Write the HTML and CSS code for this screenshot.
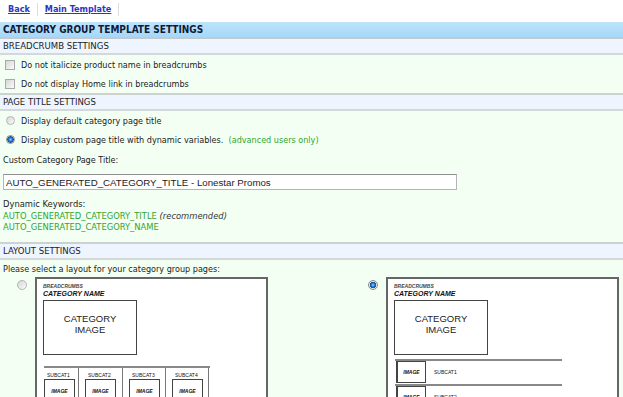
FILE: index.html
```html
<!DOCTYPE html>
<html lang="en">
<head>
  <meta charset="UTF-8" />
  <title>Category Group Template Settings</title>
  <link rel="stylesheet" href="styles.css">
</head>
<body>
  <div class="topnav">
    <a href="#">Back</a><span class="sep"></span><a href="#">Main Template</a><span class="sep"></span>
  </div>

  <div class="page-title">CATEGORY GROUP TEMPLATE SETTINGS</div>

  <div class="section-head">BREADCRUMB SETTINGS</div>
  <div class="section-body">
    <label class="opt"><input type="checkbox" class="chk" />Do not italicize product name in breadcrumbs</label>
    <label class="opt"><input type="checkbox" class="chk" />Do not display Home link in breadcrumbs</label>
  </div>

  <div class="section-head">PAGE TITLE SETTINGS</div>
  <div class="section-body title-body">
    <label class="opt"><input type="radio" name="ptitle" class="rad" />Display default category page title</label>
    <label class="opt"><input type="radio" name="ptitle" class="rad" checked />Display custom page title with dynamic variables. <span class="green">&nbsp;(advanced users only)</span></label>
    <div class="field-label">Custom Category Page Title:</div>
    <input type="text" class="title-input" value="AUTO_GENERATED_CATEGORY_TITLE - Lonestar Promos" />
    <div class="keywords">
      <div>Dynamic Keywords:</div>
      <div><span class="green">AUTO_GENERATED_CATEGORY_TITLE</span> <em>(recommended)</em></div>
      <div><span class="green">AUTO_GENERATED_CATEGORY_NAME</span></div>
    </div>
  </div>

  <div class="section-head">LAYOUT SETTINGS</div>
  <div class="layout-body">
    <div class="field-label">Please select a layout for your category group pages:</div>
    <div class="layouts">
      <label class="layout-opt">
        <input type="radio" name="layout" class="rad" />
        <div class="preview">
          <div class="pv-crumbs">BREADCRUMBS</div>
          <div class="pv-name">CATEGORY NAME</div>
          <div class="pv-catimg">CATEGORY<br>IMAGE</div>
          <div class="pv-grid">
            <div class="pv-cell"><div class="pv-sub">SUBCAT1</div><div class="pv-img">IMAGE</div></div>
            <div class="pv-cell"><div class="pv-sub">SUBCAT2</div><div class="pv-img">IMAGE</div></div>
            <div class="pv-cell"><div class="pv-sub">SUBCAT3</div><div class="pv-img">IMAGE</div></div>
            <div class="pv-cell"><div class="pv-sub">SUBCAT4</div><div class="pv-img">IMAGE</div></div>
          </div>
        </div>
      </label>
      <label class="layout-opt">
        <input type="radio" name="layout" class="rad" checked />
        <div class="preview">
          <div class="pv-crumbs">BREADCRUMBS</div>
          <div class="pv-name">CATEGORY NAME</div>
          <div class="pv-catimg">CATEGORY<br>IMAGE</div>
          <div class="pv-list">
            <div class="pv-row"><div class="pv-img">IMAGE</div><span>SUBCAT1</span></div>
            <div class="pv-row"><div class="pv-img">IMAGE</div><span>SUBCAT2</span></div>
          </div>
        </div>
      </label>
    </div>
  </div>
</body>
</html>
```

FILE: styles.css
```css
* {
  box-sizing: border-box;
}

body {
  margin: 0;
  font-family: "DejaVu Sans Condensed", "DejaVu Sans", sans-serif;
  font-stretch: condensed;
  font-size: 9px;
  color: #222;
  background: #f4fff3;
}

.topnav {
  background: #fff;
  height: 22px;
  padding: 3px 0 0 8px;
  display: flex;
  align-items: flex-start;
}

.topnav a {
  color: #2b36c4;
  font-weight: bold;
  font-size: 9px;
  line-height: 12px;
}

.topnav .sep {
  width: 1px;
  height: 13px;
  background: #dcdcdc;
  margin: 0 7px;
}

.page-title {
  height: 17px;
  line-height: 15px;
  padding-left: 3px;
  font-weight: bold;
  font-size: 10px;
  color: #0e1a38;
  background: linear-gradient(to bottom, #bfe4fc, #a6d8f9);
  border-bottom: 2px solid #c3c9cc;
}

.section-head {
  height: 16px;
  line-height: 14px;
  padding-left: 3px;
  font-size: 9.5px;
  background: #eef5ff;
  border-bottom: 2px solid #d3d9d9;
}

.section-body {
  background: #f4fff3;
  border-bottom: 2px solid #ccd2d2;
}

.opt {
  display: flex;
  align-items: center;
  height: 19px;
  white-space: pre;
}

.green {
  color: #2fa52f;
}

.chk,
.rad {
  appearance: none;
  -webkit-appearance: none;
  margin: 0 6px 0 5px;
  width: 10px;
  height: 10px;
  border: 1px solid #a9a9a9;
  background: linear-gradient(135deg, #d6d6d6, #fbfbfb);
  flex: none;
}

.rad {
  border-radius: 50%;
  margin-left: 6px;
  width: 9px;
  height: 9px;
  border-color: #b4b4b4;
}

.rad:checked {
  background: radial-gradient(circle at 50% 50%, #8fd0ff 0, #1c6fc4 2px, #154e98 3px, #e6e6e6 3.5px, #fafafa 100%);
  border-color: #8a8a8a;
}

.title-body {
  padding-bottom: 9px;
}

.field-label {
  padding: 4px 0 0 3px;
  line-height: 14px;
}

.title-input {
  display: block;
  margin: 7px 0 0 3px;
  width: 454px;
  height: 16px;
  padding: 0 2px;
  border: 1px solid #b5b5b5;
  border-top-color: #8e8e8e;
  font-family: "Liberation Sans", sans-serif;
  font-size: 9.7px;
  color: #222;
  background: #fff;
}

.keywords {
  padding: 8px 0 0 3px;
  line-height: 11.5px;
  font-size: 9.3px;
}

.keywords em {
  color: #333;
}

.layout-body {
  background: #f4fff3;
}

.layout-body .field-label {
  padding-top: 2px;
  line-height: 14px;
}

.layouts {
  display: grid;
  grid-template-columns: 351px 1fr;
  padding-top: 1px;
}

.layout-opt {
  display: flex;
  align-items: flex-start;
}

.layout-opt .rad {
  margin: 3px 0 0 17px;
  width: 10px;
  height: 10px;
}

.preview {
  margin-left: 8px;
  width: 233px;
  height: 140px;
  border: 2px solid #666;
  background: #fff;
  padding: 4px 6px;
  font-family: "Liberation Sans", sans-serif;
  color: #111;
}

.pv-crumbs {
  font-size: 5px;
  line-height: 6px;
  font-weight: bold;
  font-style: italic;
  color: #444;
}

.pv-name {
  font-size: 7px;
  line-height: 10px;
  font-weight: bold;
  font-style: italic;
}

.pv-catimg {
  margin-top: 1px;
  width: 94px;
  height: 55px;
  border: 1px solid #444;
  text-align: center;
  font-size: 9.5px;
  line-height: 11px;
  padding-top: 12px;
  color: #222;
}

.pv-img {
  width: 31px;
  height: 24px;
  border: 1px solid #444;
  font-size: 5px;
  font-weight: bold;
  font-style: italic;
  display: flex;
  align-items: center;
  justify-content: center;
}

.pv-grid {
  display: grid;
  grid-template-columns: 35px 44px 43px 43px;
  margin: 11px 0 0 1px;
  width: 166px;
  border-top: 2px solid #888;
}

.pv-cell {
  border-right: 1px solid #777;
  padding: 4px 0 0 6px;
  height: 40px;
}

.pv-cell:first-child {
  padding-left: 0;
}

.pv-sub {
  font-size: 5px;
  line-height: 7px;
  padding-left: 3px;
}

.pv-list {
  margin: 4px 0 0 1px;
  width: 167px;
}

.pv-row {
  display: flex;
  align-items: center;
  height: 25px;
  border-top: 2px solid #888;
  font-size: 5px;
}

.pv-row .pv-img {
  margin-left: 1px;
  width: 30px;
  height: 22px;
  border-width: 1px 1px 1px 2px;
}

.pv-row span {
  margin-left: 8px;
}
```
